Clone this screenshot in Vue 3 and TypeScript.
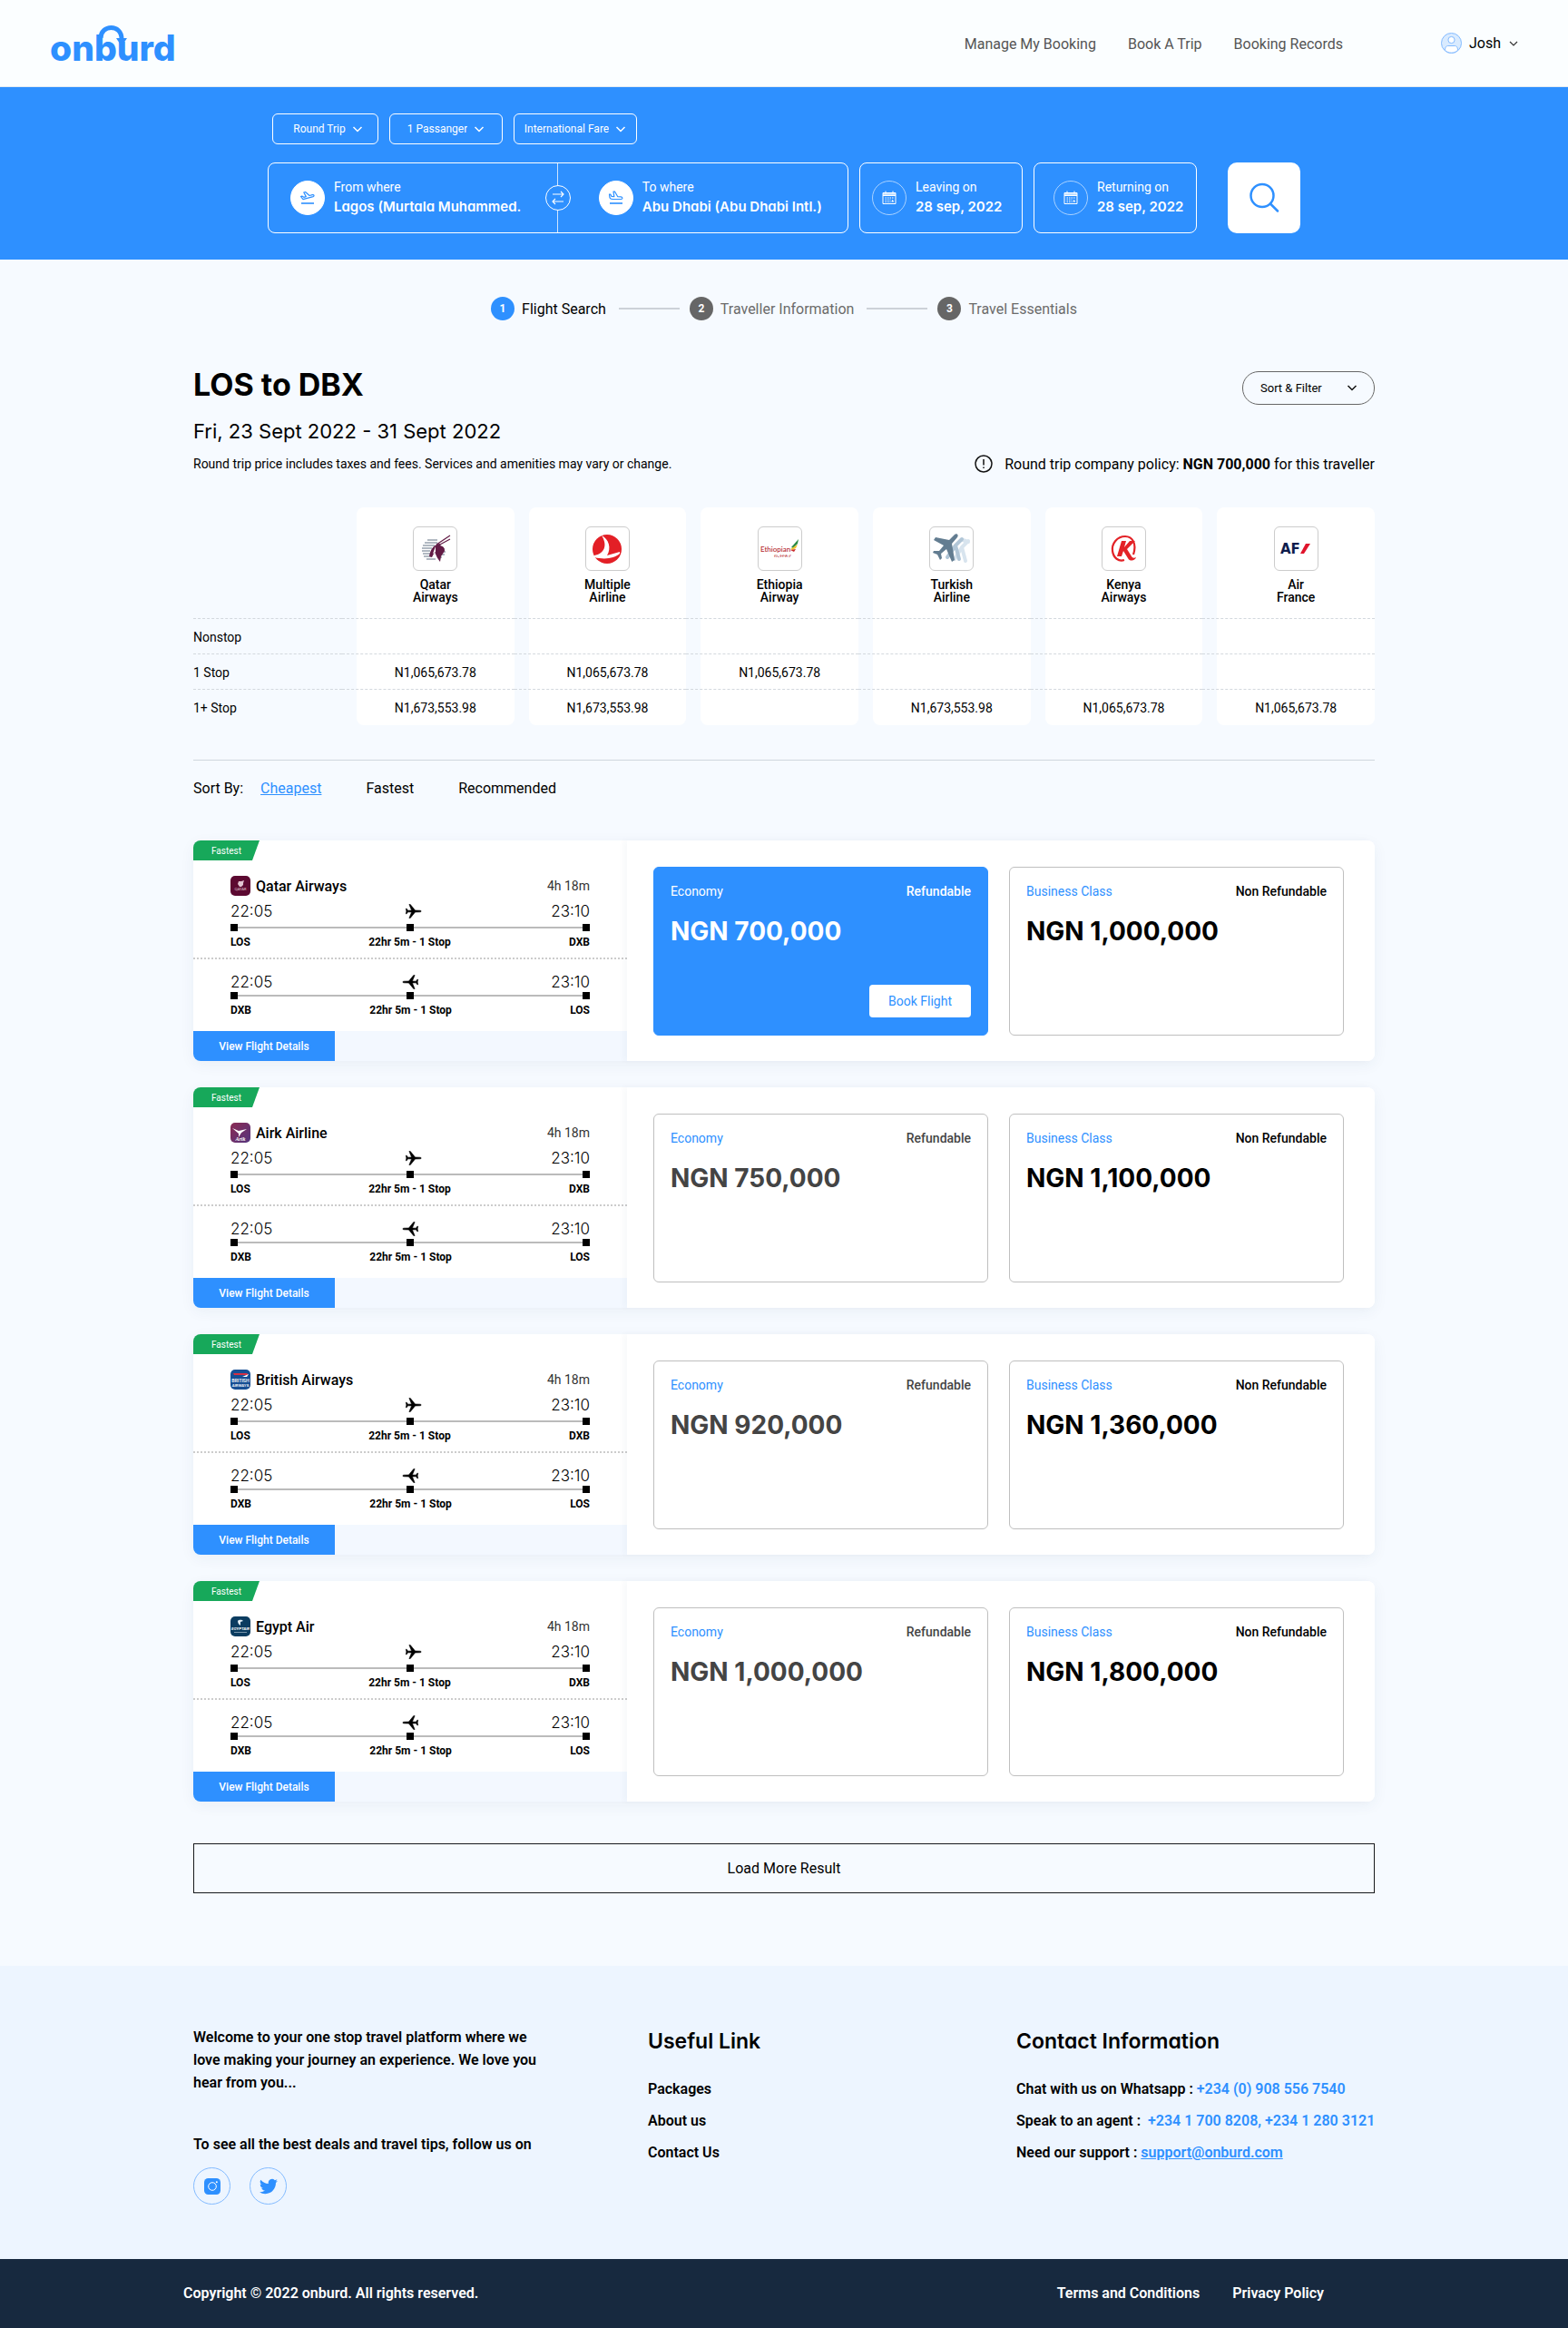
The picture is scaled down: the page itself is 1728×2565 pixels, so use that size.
<script setup lang="ts">
import { ref } from 'vue'

interface Fare {
  cabin: string
  terms: string
  price: string
}

interface Flight {
  airline: string
  logo: string
  selected: boolean
  economy: Fare
  business: Fare
}

interface Airline {
  id: string
  first: string
  second: string
}

const trip = ref('Round Trip')
const passengers = ref('1 Passanger')
const fareType = ref('International Fare')
const origin = ref('Lagos (Murtala Muhammed.')
const destination = ref('Abu Dhabi (Abu Dhabi Intl.)')
const leaving = ref('28 sep, 2022')
const returning = ref('28 sep, 2022')

const steps = ['Flight Search', 'Traveller Information', 'Travel Essentials']
const sorts = ['Cheapest', 'Fastest', 'Recommended']
const activeSort = ref('Cheapest')

const airlines: Airline[] = [
  { id: 'qatar', first: 'Qatar', second: 'Airways' },
  { id: 'multiple', first: 'Multiple', second: 'Airline' },
  { id: 'ethiopia', first: 'Ethiopia', second: 'Airway' },
  { id: 'turkish', first: 'Turkish', second: 'Airline' },
  { id: 'kenya', first: 'Kenya', second: 'Airways' },
  { id: 'france', first: 'Air', second: 'France' },
]

const low = 'N1,065,673.78'
const high = 'N1,673,553.98'
const stopRows = [
  { label: 'Nonstop', prices: ['', '', '', '', '', ''] },
  { label: '1 Stop', prices: [low, low, low, '', '', ''] },
  { label: '1+ Stop', prices: [high, high, '', high, low, low] },
]

function makeFlight(airline: string, logo: string, eco: string, biz: string, selected = false): Flight {
  return {
    airline,
    logo,
    selected,
    economy: { cabin: 'Economy', terms: 'Refundable', price: eco },
    business: { cabin: 'Business Class', terms: 'Non Refundable', price: biz },
  }
}

const flights: Flight[] = [
  makeFlight('Qatar Airways', 'qatar', 'NGN 700,000', 'NGN 1,000,000', true),
  makeFlight('Airk Airline', 'airk', 'NGN 750,000', 'NGN 1,100,000'),
  makeFlight('British Airways', 'british', 'NGN 920,000', 'NGN 1,360,000'),
  makeFlight('Egypt Air', 'egypt', 'NGN 1,000,000', 'NGN 1,800,000'),
]

const legs = [
  { key: 'out', from: 'LOS', to: 'DXB' },
  { key: 'back', from: 'DXB', to: 'LOS' },
]
</script>

<template>
  <div class="page">
    <header class="topbar">
      <a href="#" class="brand" aria-label="onburd">
        <svg width="144" height="60" viewBox="0 0 144 60">
          <text x="0" y="49" font-family="Inter, sans-serif" font-size="39" font-weight="800" fill="#2e90ff">onburd</text>
          <path d="M56 24 C56 9 79 8 79 25" fill="none" stroke="#2e90ff" stroke-width="5" />
          <path d="M73 24 H85 L79 33 Z" fill="#2e90ff" />
        </svg>
      </a>
      <nav class="nav">
        <a href="#">Manage My Booking</a>
        <a href="#">Book A Trip</a>
        <a href="#">Booking Records</a>
      </nav>
      <button class="user" type="button">
        <svg width="23" height="23" viewBox="0 0 23 23" fill="#d9ebff" stroke="#83bbff">
          <circle cx="11.5" cy="11.5" r="11" />
          <circle cx="11.5" cy="8" r="3.6" fill="#fff" />
          <path d="M4.5 19.5c0-4 1.500-5 3.500-5h7c2 0 3.500 1 3.500 5-4 3.600-10 3.600-14 0Z" fill="#fff" />
        </svg>
        <span>Josh</span>
        <svg class="user-caret" width="10" height="6" viewBox="0 0 10 6"><path d="M1 1l4 4 4-4" fill="none" stroke="#333" stroke-width="1.200" /></svg>
      </button>
    </header>

    <form class="search" @submit.prevent>
      <div class="search-inner">
        <div class="options">
          <label class="option trip">
            <select v-model="trip" aria-label="Trip type"><option>Round Trip</option><option>One Way</option></select>
            <svg width="12" height="7" viewBox="0 0 12 7"><path d="M1.500 1l4.500 4.500L10.500 1" fill="none" stroke="#fff" stroke-width="1.500" /></svg>
          </label>
          <label class="option pax">
            <select v-model="passengers" aria-label="Passengers"><option>1 Passanger</option></select>
            <svg width="12" height="7" viewBox="0 0 12 7"><path d="M1.500 1l4.500 4.500L10.500 1" fill="none" stroke="#fff" stroke-width="1.500" /></svg>
          </label>
          <label class="option fare-kind">
            <select v-model="fareType" aria-label="Fare type"><option>International Fare</option><option>Local Fare</option></select>
            <svg width="12" height="7" viewBox="0 0 12 7"><path d="M1.500 1l4.500 4.500L10.500 1" fill="none" stroke="#fff" stroke-width="1.500" /></svg>
          </label>
        </div>

        <div class="fields">
          <div class="box route">
            <div class="field">
              <span class="disc solid">
                <svg width="18" height="18" viewBox="0 0 18 18" fill="none" stroke="#2e90ff" stroke-width="1.200" stroke-linejoin="round">
                  <path d="M1.500 7.500l1.300-.4 2 1.200 2.500-.7L4.800 3l1.700-.5 4.500 4 3.300-.9c1.800-.4 2.400 1.500.8 2L4 10.700Z" />
                  <path d="M2 15h14" stroke-width="1.600" />
                </svg>
              </span>
              <div class="field-text">
                <label for="origin">From where</label>
                <input id="origin" v-model="origin" type="text" />
              </div>
            </div>
            <div class="divider">
              <button class="swap" type="button" aria-label="Swap airports">
                <svg width="14" height="16" viewBox="0 0 14 16" fill="none" stroke="#fff" stroke-width="1.100"><path d="M1 4h12M10 1l3 3-3 3M13 12H1M4 9l-3 3 3 3" /></svg>
              </button>
            </div>
            <div class="field">
              <span class="disc solid">
                <svg width="18" height="18" viewBox="0 0 18 18" fill="none" stroke="#2e90ff" stroke-width="1.200" stroke-linejoin="round">
                  <path d="M1.500 5l1.300.2 1.200 2.200 2.800.2L6 2l1.600.2 3.200 5.500 3.600.2c2 .3 2 2.600 0 2.600H5C3 10.500 2 9.500 1.800 8Z" />
                  <path d="M2 15h14" stroke-width="1.600" />
                </svg>
              </span>
              <div class="field-text">
                <label for="destination">To where</label>
                <input id="destination" v-model="destination" type="text" />
              </div>
            </div>
          </div>

          <div class="box date">
            <span class="disc">
              <svg width="16" height="16" viewBox="0 0 16 16" fill="none" stroke="#fff" stroke-width="1"><path d="M1 2.500h14v12H1zM1 5.500h14M4 .5v3M12 .5v3" /><path d="M1 4h14" stroke-width="2" opacity=".7" /><path d="M3.500 8h9M3.500 10.200h6M3.500 12.400h6" stroke-dasharray="1.500 1" /><path d="M11.700 9.800l1.500 2.700h-3z" fill="#fff" stroke="none" /></svg>
            </span>
            <div class="field-text">
              <label for="leaving">Leaving on</label>
              <input id="leaving" v-model="leaving" type="text" />
            </div>
          </div>
          <div class="box date back">
            <span class="disc">
              <svg width="16" height="16" viewBox="0 0 16 16" fill="none" stroke="#fff" stroke-width="1"><path d="M1 2.500h14v12H1zM1 5.500h14M4 .5v3M12 .5v3" /><path d="M1 4h14" stroke-width="2" opacity=".7" /><path d="M3.500 8h9M3.500 10.200h6M3.500 12.400h6" stroke-dasharray="1.500 1" /><path d="M11.700 9.800l1.500 2.700h-3z" fill="#fff" stroke="none" /></svg>
            </span>
            <div class="field-text">
              <label for="returning">Returning on</label>
              <input id="returning" v-model="returning" type="text" />
            </div>
          </div>
          <button class="go" type="submit" aria-label="Search">
            <svg width="34" height="34" viewBox="0 0 34 34" fill="none" stroke="#2e90ff" stroke-width="2.500" stroke-linecap="round"><circle cx="15" cy="14.500" r="12.500" /><path d="M24 23.500l8 8" /></svg>
          </button>
        </div>
      </div>
    </form>

    <main class="main">
      <ol class="steps">
        <li v-for="(step, i) in steps" :key="step" :class="{ current: i === 0 }">
          <span class="num">{{ i + 1 }}</span>
          <span>{{ step }}</span>
        </li>
      </ol>

      <div class="title-row">
        <h1>LOS to DBX</h1>
        <button class="sort-filter" type="button">
          <span>Sort &amp; Filter</span>
          <svg width="12" height="7" viewBox="0 0 12 7"><path d="M1.500 1l4.500 4.500L10.500 1" fill="none" stroke="#111" stroke-width="1.500" /></svg>
        </button>
      </div>
      <p class="dates">Fri, 23 Sept 2022 - 31 Sept 2022</p>
      <div class="notes">
        <p class="fine">Round trip price includes taxes and fees. Services and amenities may vary or change.</p>
        <p class="policy">
          <svg width="20" height="20" viewBox="0 0 20 20" fill="none" stroke="#111" stroke-width="1.500"><circle cx="10" cy="10" r="9" /><path d="M10 5v6.500M10 13.500v1.500" /></svg>
          <span>Round trip company policy: <b>NGN 700,000</b> for this traveller</span>
        </p>
      </div>

      <table class="matrix">
        <thead>
          <tr>
            <td class="corner"></td>
            <th v-for="a in airlines" :key="a.id" scope="col">
              <div class="cell head">
                <span class="tile">
                  <svg v-if="a.id === 'qatar'" width="34" height="34" viewBox="0 0 34 34">
                    <path d="M8 7h11M5 10h14M3 13h13M2 16h11M2 19h9M3 22h9M4 25h9M7 28h10M20 17h7M20 20h8M20 23h7M19 26h5" stroke="#98a2ae" stroke-width="1.500" />
                    <path d="M33 2 18 12M33 6 20 13" stroke="#621b45" stroke-width="1.200" />
                    <path d="M21 11c-6 1-10 7-11 14l3 1 3-6c2 5 3 7 6 11l1-6 4-6c0-3-1-5-5-6 1-1 1-2-1-2Z" fill="#621b45" />
                    <path d="M17 14l-3 8 3-2Z" fill="#fff" />
                  </svg>
                  <svg v-else-if="a.id === 'multiple'" width="34" height="34" viewBox="0 0 34 34">
                    <circle cx="17" cy="17" r="16" fill="#e31f26" />
                    <path d="M11 2c8 4 11 14 6 22l14-4v2c-6 5-16 7-28 4v-2c11-2 15-11 8-22Z" fill="#fff" />
                  </svg>
                  <svg v-else-if="a.id === 'ethiopia'" width="44" height="24" viewBox="0 0 44 24">
                    <text x="1" y="15" font-family="Lato, sans-serif" font-size="8" fill="#b3242c">Ethiopian</text>
                    <text x="16" y="21" font-family="Lato, sans-serif" font-size="5" fill="#b3242c">የኢትዮጵያ</text>
                    <path d="M35 10 43 1 42 6 37 11Z" fill="#2c8b45" /><path d="M34 12l8-5-2 4-4 2Z" fill="#f0c530" /><path d="M34 13l6-1-2 3Z" fill="#c92b2b" />
                  </svg>
                  <svg v-else-if="a.id === 'turkish'" width="42" height="36" viewBox="0 0 42 36">
                    <g stroke-linecap="round" stroke-linejoin="round" fill="none">
                      <path d="M39 9 32 16 36 31M32 16l-8 13M33 8l6 2" stroke="#d8e4ee" stroke-width="4" />
                      <path d="M32 7 25 14 29 29M25 14l-9 13" stroke="#b1c6d7" stroke-width="4" />
                    </g>
                    <path d="M24 2c2-2 5 0 3 3l-6 7 3 18-3 2-6-14-6 5 1 5-2 2-3-6-5-2 1-2 6 0 5-6L1 8l2-3 15 3Z" fill="#637d91" />
                  </svg>
                  <svg v-else-if="a.id === 'kenya'" width="32" height="32" viewBox="0 0 32 32">
                    <path d="M27 22C31 10 26 2 18 2 9 2 3 10 4 18c1 8 7 12 13 10" fill="none" stroke="#e32227" stroke-width="2.200" />
                    <path d="M9 24 14 7h5l-2 7 6-7h6l-9 9 5 8c1 2 3 2 5 1-1 4-7 5-9 1l-5-8-2 6Z" fill="#e32227" />
                  </svg>
                  <svg v-else width="36" height="24" viewBox="0 0 36 24">
                    <text x="1" y="17" font-family="DejaVu Sans, sans-serif" font-size="15" font-weight="700" fill="#0e1c4c">AF</text>
                    <path d="M23 17 29 6h5l-7 11Z" fill="#e0142c" />
                  </svg>
                </span>
                <span>{{ a.first }}<br />{{ a.second }}</span>
              </div>
            </th>
          </tr>
        </thead>
        <tbody>
          <tr v-for="row in stopRows" :key="row.label">
            <th class="row-label" scope="row">{{ row.label }}</th>
            <td v-for="(p, i) in row.prices" :key="i"><div class="cell">{{ p }}</div></td>
          </tr>
        </tbody>
      </table>

      <div class="sortbar">
        <span>Sort By:</span>
        <div class="sorts">
          <button v-for="s in sorts" :key="s" type="button" :class="{ on: s === activeSort }" @click="activeSort = s">{{ s }}</button>
        </div>
      </div>

      <div class="flights">
        <article v-for="f in flights" :key="f.airline" class="flight">
          <section class="itinerary">
            <span class="badge">Fastest</span>
            <div class="carrier">
              <svg class="carrier-logo" width="22" height="22" viewBox="0 0 22 22">
                <defs>
                  <linearGradient :id="'g-' + f.logo" x1="0" y1="0" x2="1" y2="1"><stop offset="0" stop-color="#8b2a52" /><stop offset="1" stop-color="#54357f" /></linearGradient>
                </defs>
                <template v-if="f.logo === 'qatar'">
                  <rect width="22" height="22" rx="5" fill="#5c0931" />
                  <path d="M9 6h3l3-1-1 3 0 2-2 2h-2l-2-3Z" fill="#e2c5d2" />
                  <text x="11" y="16" text-anchor="middle" font-family="Lato, sans-serif" font-size="4" fill="#e2c5d2">QATAR</text>
                </template>
                <template v-else-if="f.logo === 'airk'">
                  <rect width="22" height="22" rx="5" :fill="'url(#g-' + f.logo + ')'" />
                  <path d="M2 6l7 3 9-2-6 4-3 5v-4Z" fill="#fff" />
                  <text x="11" y="20" text-anchor="middle" font-family="Liberation Serif, serif" font-style="italic" font-weight="700" font-size="6" fill="#fff">Arik</text>
                </template>
                <template v-else-if="f.logo === 'british'">
                  <rect width="22" height="22" rx="5" fill="#174f94" />
                  <path d="M3 4h15l2 2H4Z" fill="#d72f42" /><path d="M13 8l7-3-2 3Z" fill="#fff" />
                  <text x="11" y="14" text-anchor="middle" font-family="Inter, sans-serif" font-weight="600" font-size="5" fill="#fff">BRITISH</text>
                  <text x="11" y="19" text-anchor="middle" font-family="Inter, sans-serif" font-weight="600" font-size="4" fill="#fff">AIRWAYS</text>
                </template>
                <template v-else>
                  <rect width="22" height="22" rx="5" fill="#0b3c60" />
                  <path d="M8 5c2-2 5-1 6 0l-3 1v4c-2-1-3-3-3-5Z" fill="#e3eff7" />
                  <text x="11" y="15" text-anchor="middle" font-family="Inter, sans-serif" font-style="italic" font-weight="700" font-size="4" fill="#fff">EGYPTAIR</text>
                  <path d="M4 17.500h14" stroke="#7895ab" />
                </template>
              </svg>
              <h2>{{ f.airline }}</h2>
              <span class="total">4h 18m</span>
            </div>
            <div v-for="leg in legs" :key="leg.key" class="leg" :class="leg.key">
              <div class="times">
                <span>22:05</span>
                <svg width="22" height="16" viewBox="0 0 22 16"><path d="M20.500 7.200 14.500 7 9.200.5H7.900L10.600 7l-4 .2L5.200 5.200H4.300L4.900 8l-.6 2.800h.9l1.400-2 4 .2-2.700 6.500h1.300L14.500 9l6-.2q1.500-.8 0-1.600Z" stroke="#000" stroke-width=".6" /></svg>
                <span>23:10</span>
              </div>
              <div class="track"><i></i><i></i><i></i></div>
              <div class="stops">
                <span>{{ leg.from }}</span>
                <span>22hr 5m - 1 Stop</span>
                <span>{{ leg.to }}</span>
              </div>
            </div>
            <div class="strip"><button type="button">View Flight Details</button></div>
          </section>

          <section class="fares">
            <div class="fare" :class="f.selected ? 'selected' : 'muted'">
              <div class="fare-top"><span class="cabin">{{ f.economy.cabin }}</span><span class="terms">{{ f.economy.terms }}</span></div>
              <strong class="price">{{ f.economy.price }}</strong>
              <button v-if="f.selected" class="book" type="button">Book Flight</button>
            </div>
            <div class="fare">
              <div class="fare-top"><span class="cabin">{{ f.business.cabin }}</span><span class="terms">{{ f.business.terms }}</span></div>
              <strong class="price">{{ f.business.price }}</strong>
            </div>
          </section>
        </article>
      </div>

      <button class="more" type="button">Load More Result</button>
    </main>

    <footer>
      <div class="foot">
        <div class="foot-inner">
          <div class="about">
            <p>Welcome to your one stop travel platform where we<br />love making your journey an experience. We love you<br />hear from you...</p>
            <p class="follow">To see all the best deals and travel tips, follow us on</p>
            <div class="social">
              <a href="#" aria-label="Instagram">
                <svg width="18" height="18" viewBox="0 0 18 18"><rect width="18" height="18" rx="4.500" fill="#2e90ff" /><circle cx="9" cy="9" r="4.300" fill="none" stroke="#fff" stroke-width="1" /><circle cx="13.800" cy="4.200" r="1" fill="#fff" /></svg>
              </a>
              <a href="#" aria-label="Twitter">
                <svg width="20" height="20" viewBox="0 0 24 24"><path fill="#2e90ff" d="M23.950 4.570a10 10 0 0 1-2.820.77 4.960 4.960 0 0 0 2.160-2.720c-.95.550-2 .96-3.120 1.180a4.920 4.920 0 0 0-8.390 4.480C7.690 8.100 4.070 6.130 1.640 3.160a4.920 4.920 0 0 0 1.520 6.570 4.900 4.900 0 0 1-2.230-.61v.06a4.920 4.920 0 0 0 3.950 4.830 5 5 0 0 1-2.210.08 4.940 4.940 0 0 0 4.600 3.420A9.870 9.870 0 0 1 0 19.540a14 14 0 0 0 7.550 2.210c9.050 0 14-7.500 14-13.980l-.02-.64a10 10 0 0 0 2.420-2.560Z" /></svg>
              </a>
            </div>
          </div>
          <div class="links">
            <h3>Useful Link</h3>
            <a href="#">Packages</a>
            <a href="#">About us</a>
            <a href="#">Contact Us</a>
          </div>
          <div class="contact">
            <h3>Contact Information</h3>
            <p>Chat with us on Whatsapp : <a href="#">+234 (0) 908 556 7540</a></p>
            <p>Speak to an agent :&nbsp; <a href="#">+234 1 700 8208, +234 1 280 3121</a></p>
            <p>Need our support : <a href="#" class="mail">support@onburd.com</a></p>
          </div>
        </div>
      </div>
      <div class="legal">
        <div class="legal-inner">
          <span>Copyright © 2022 onburd. All rights reserved.</span>
          <nav>
            <a href="#">Terms and Conditions</a>
            <a href="#">Privacy Policy</a>
          </nav>
        </div>
      </div>
    </footer>
  </div>
</template>

<style>
body {
  background: #f6faff;
}
</style>

<style scoped>
.page,
.page * {
  box-sizing: border-box;
}
.page {
  --blue: #2e90ff;
  --display: Inter, 'Open Sans', sans-serif;
  font-family: Roboto, 'Liberation Sans', sans-serif;
  font-size: 16px;
  color: #000;
}
button,
input,
select {
  font: inherit;
  color: inherit;
  border: 0;
  background: none;
  padding: 0;
}
button {
  cursor: pointer;
}
a {
  color: inherit;
  text-decoration: none;
}
h1, h2, h3, p, ol {
  margin: 0;
  padding: 0;
}
svg {
  display: block;
  flex: none;
}

/* top bar */
.topbar {
  height: 96px;
  display: flex;
  align-items: center;
  padding: 0 55px;
  background: #fbfeff;
  border-bottom: 1px solid #e3eaf2;
}
.brand {
  margin-right: auto;
}
.nav {
  display: flex;
  gap: 35px;
  padding-top: 2px;
  color: #555;
}
.user {
  display: flex;
  align-items: center;
  gap: 8px;
  margin-left: 108px;
}
.user-caret {
  margin-left: 1px;
}

/* search */
.search {
  background: var(--blue);
  color: #fff;
  padding: 29px 24px;
}
.search-inner {
  max-width: 1138px;
  margin: 0 auto;
}
.options {
  display: flex;
  gap: 12px;
  padding-left: 5px;
}
.option {
  height: 34px;
  border: 1px solid #fff;
  border-radius: 6px;
  display: flex;
  align-items: center;
  justify-content: center;
  gap: 7px;
  font-size: 12px;
}
.option select {
  appearance: none;
  field-sizing: content;
  outline: none;
}
.option option {
  color: #000;
}
.trip {
  width: 117px;
  padding-left: 6px;
}
.pax { width: 125px; }
.fare-kind { width: 136px; }
.fields {
  display: flex;
  gap: 12px;
  margin-top: 20px;
}
.box {
  height: 78px;
  border: 1px solid #fff;
  border-radius: 8px;
  display: flex;
  align-items: center;
}
.route {
  flex: 1;
  align-items: stretch;
}
.field {
  flex: 1 1 50%;
  display: flex;
  align-items: center;
  gap: 10px;
  padding-left: 24px;
  min-width: 0;
}
.divider {
  display: flex;
  flex: none;
  align-items: center;
  justify-content: center;
  width: 28px;
  background: linear-gradient(#cfe5ff, #cfe5ff) center / 1px 100% no-repeat;
}
.divider + .field {
  padding-left: 31px;
}
.swap {
  width: 28px;
  height: 28px;
  flex: none;
  border: 1px solid #fff;
  border-radius: 50%;
  background: var(--blue);
  display: flex;
  align-items: center;
  justify-content: center;
}
.disc {
  width: 38px;
  height: 38px;
  flex: none;
  border: 1px solid #a9d2ff;
  border-radius: 50%;
  display: flex;
  align-items: center;
  justify-content: center;
}
.disc.solid {
  background: #fff;
  border-color: #fff;
}
.field-text {
  flex: 1;
  min-width: 0;
  display: flex;
  flex-direction: column;
  padding-bottom: 3px;
}
.field-text label {
  font-size: 14px;
  line-height: 22px;
}
.field-text input {
  width: 100%;
  height: 22px;
  font-family: var(--display);
  font-feature-settings: 'cv11';
  font-size: 15px;
  font-weight: 600;
  outline: none;
}
.date {
  width: 180px;
  gap: 10px;
  padding-left: 13px;
}
.date.back {
  padding-left: 21px;
}
.go {
  width: 80px;
  height: 78px;
  margin-left: 22px;
  border-radius: 10px;
  background: #fff;
  display: flex;
  align-items: center;
  justify-content: center;
}

/* results */
.main {
  max-width: 1302px;
  margin: 0 auto;
  padding: 41px 0 80px;
}
.steps {
  display: flex;
  justify-content: center;
  list-style: none;
  color: #6b6b6b;
}
.steps li {
  display: flex;
  align-items: center;
  gap: 8px;
}
.steps li + li::before {
  content: '';
  width: 67px;
  height: 2px;
  margin: 0 3px 0 14px;
  background: #ccd1d8;
}
.steps .current {
  color: #000;
}
.num {
  width: 26px;
  height: 26px;
  border-radius: 50%;
  background: #666;
  color: #fff;
  font-size: 12px;
  font-weight: 700;
  display: flex;
  align-items: center;
  justify-content: center;
}
.current .num {
  background: var(--blue);
}
.title-row {
  display: flex;
  align-items: flex-end;
  justify-content: space-between;
  margin-top: 49px;
}
h1 {
  font-family: var(--display);
  font-size: 34px;
  line-height: 44px;
  font-weight: 700;
}
.sort-filter {
  width: 146px;
  height: 37px;
  border: 1px solid #666;
  border-radius: 18px;
  padding: 0 18px 0 19px;
  display: flex;
  align-items: center;
  justify-content: space-between;
  font-size: 13px;
}
.dates {
  margin-top: 13px;
  font-family: var(--display);
  font-size: 22px;
  line-height: 32px;
}
.notes {
  display: flex;
  align-items: center;
  justify-content: space-between;
  height: 22px;
  margin-top: 9px;
}
.fine {
  font-size: 14px;
}
.policy {
  display: flex;
  align-items: center;
  gap: 13px;
}

/* price matrix */
.matrix {
  width: 100%;
  margin-top: 37px;
  table-layout: fixed;
  border-spacing: 0;
  font-size: 14px;
}
.matrix th,
.matrix td {
  position: relative;
  padding: 0 0 0 16px;
}
.matrix .corner {
  width: 164px;
  padding: 0;
}
.matrix .row-label {
  padding: 0;
  text-align: left;
  font-weight: 400;
}
.matrix thead td::after,
.matrix thead th::after,
.matrix tbody tr:not(:last-child) > *::after {
  content: '';
  position: absolute;
  left: 0;
  right: 0;
  bottom: 0;
  border-bottom: 1px dashed #d3d8de;
}
.cell {
  height: 39px;
  background: #fff;
  display: flex;
  align-items: center;
  justify-content: center;
}
.cell.head {
  height: 123px;
  padding-top: 21px;
  border-radius: 8px 8px 0 0;
  flex-direction: column;
  justify-content: flex-start;
  gap: 8px;
  font-weight: 500;
  line-height: 14px;
  text-align: center;
}
tbody tr:last-child .cell {
  border-radius: 0 0 8px 8px;
}
.tile {
  width: 49px;
  height: 49px;
  border: 1px solid #ccc;
  border-radius: 6px;
  display: flex;
  align-items: center;
  justify-content: center;
}

.sortbar {
  display: flex;
  gap: 19px;
  margin-top: 38px;
  padding-top: 19px;
  border-top: 1px solid #d0d6dd;
  line-height: 24px;
}
.sorts {
  display: flex;
  gap: 49px;
}
.sorts .on {
  color: var(--blue);
  text-decoration: underline;
}

/* flight cards */
.flights {
  display: grid;
  gap: 29px;
  margin-top: 45px;
}
.flight {
  display: flex;
  background: #fff;
  border-radius: 8px;
  box-shadow: 0 4px 16px rgba(30, 60, 100, 0.06);
}
.itinerary {
  width: 478px;
  display: flex;
  flex-direction: column;
}
.badge {
  width: 73px;
  height: 22px;
  padding-left: 20px;
  border-radius: 8px 0 0 0;
  background: #17a85a;
  clip-path: polygon(0 0, 100% 0, 65px 100%, 0 100%);
  color: #fff;
  font-size: 10px;
  line-height: 23px;
}
.carrier {
  display: flex;
  align-items: center;
  gap: 6px;
  height: 22px;
  margin: 17px 41px 6px;
}
.carrier h2 {
  font-size: 16px;
  font-weight: 500;
}
.total {
  margin-left: auto;
  font-size: 14px;
  color: #333;
}
.leg {
  padding: 0 41px;
}
.out {
  padding-bottom: 9px;
  border-bottom: 2px dotted #ccc;
}
.back.leg {
  padding-top: 14px;
  padding-bottom: 15px;
}
.times {
  display: flex;
  align-items: center;
  justify-content: space-between;
  font-family: var(--display);
  font-size: 17px;
  font-weight: 300;
  line-height: 22px;
}
.out .times {
  margin-bottom: 3px;
}
.back .times svg {
  transform: scaleX(-1);
}
.track {
  display: flex;
  justify-content: space-between;
  background: linear-gradient(#bbb, #bbb) center / 100% 2px no-repeat;
}
.track i {
  width: 8px;
  height: 8px;
  background: #000;
}
.stops {
  display: flex;
  justify-content: space-between;
  margin-top: 4px;
  font-size: 12px;
  line-height: 16px;
  font-weight: 700;
}
.strip {
  height: 33px;
  background: #f3f8ff;
  border-radius: 0 0 0 8px;
}
.strip button {
  width: 156px;
  height: 33px;
  border-radius: 0 0 0 8px;
  background: var(--blue);
  color: #fff;
  font-size: 12px;
  font-weight: 500;
}
.fares {
  flex: 1;
  display: grid;
  grid-template-columns: 1fr 1fr;
  gap: 23px;
  padding: 29px 34px 28px 29px;
  border-radius: 0 8px 8px 0;
  background: #fff;
  box-shadow: -4px 0 6px rgba(30, 60, 100, 0.03);
}
.fare {
  display: flex;
  flex-direction: column;
  border: 1px solid #bfbfbf;
  border-radius: 6px;
  padding: 17px 18px 19px;
}
.fare-top {
  display: flex;
  justify-content: space-between;
  font-size: 14px;
  line-height: 18px;
}
.cabin {
  color: var(--blue);
}
.terms {
  font-weight: 500;
}
.price {
  margin-top: 17px;
  font-family: var(--display);
  font-size: 28px;
  line-height: 36px;
  font-weight: 700;
}
.muted .price,
.muted .terms {
  color: #444;
}
.selected {
  background: var(--blue);
  border-color: var(--blue);
  color: #fff;
}
.selected .cabin {
  color: #fff;
}
.book {
  width: 112px;
  height: 36px;
  margin: auto 0 0 auto;
  border-radius: 4px;
  background: #fff;
  color: var(--blue);
  font-size: 14px;
}
.more {
  width: 100%;
  height: 55px;
  margin-top: 46px;
  border: 1px solid #17191c;
}

/* footer */
.foot {
  background: #edf5ff;
  font-weight: 600;
}
.foot-inner {
  max-width: 1302px;
  margin: 0 auto;
  padding: 66px 0 60px;
  display: grid;
  grid-template-columns: 501px 406px 1fr;
}
.about p {
  line-height: 25px;
}
.about .follow {
  margin-top: 43px;
}
.social {
  display: flex;
  gap: 21px;
  margin-top: 13px;
}
.social a {
  width: 41px;
  height: 41px;
  border: 1px solid #83bbff;
  border-radius: 50%;
  display: flex;
  align-items: center;
  justify-content: center;
}
h3 {
  margin-bottom: 15px;
  font-family: var(--display);
  font-feature-settings: 'cv11';
  font-size: 23px;
  line-height: 30px;
  font-weight: 600;
}
.links,
.contact {
  display: flex;
  flex-direction: column;
  gap: 11px;
  padding-top: 2px;
  line-height: 24px;
  white-space: nowrap;
}
.contact a {
  color: var(--blue);
}
.contact .mail {
  text-decoration: underline;
}
.legal {
  background: #17293f;
  color: #fff;
  font-weight: 600;
}
.legal-inner {
  max-width: 1324px;
  height: 76px;
  margin: 0 auto;
  padding: 0 67px 2px 0;
  display: flex;
  align-items: center;
  justify-content: space-between;
}
.legal nav {
  display: flex;
  gap: 36px;
}
</style>
